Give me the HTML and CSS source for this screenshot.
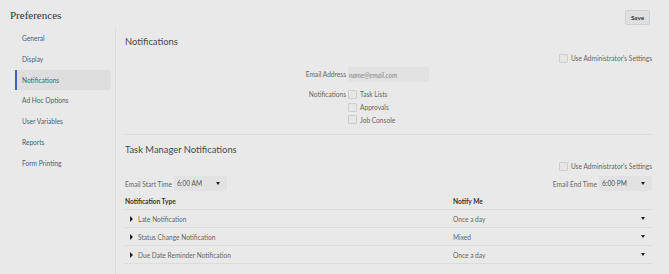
FILE: index.html
```html
<!DOCTYPE html>
<html lang="en">
<head>
    <meta charset="UTF-8">
    <title>Preferences</title>
    <link rel="stylesheet" href="styles.css">
</head>
<body>
    <div class="header">
        <h1>Preferences</h1>
        <button class="save">Save</button>
    </div>

    <div class="layout">
        <ul class="nav">
            <li>General</li>
            <li>Display</li>
            <li class="active">Notifications</li>
            <li>Ad Hoc Options</li>
            <li>User Variables</li>
            <li>Reports</li>
            <li>Form Printing</li>
        </ul>

        <div class="main">
            <section class="section">
                <h2>Notifications</h2>
                <label class="admin"><span class="box"></span>Use Administrator's Settings</label>

                <div class="form-row">
                    <span class="label">Email Address</span>
                    <input class="text" type="text" placeholder="name@email.com">
                </div>
                <div class="form-row">
                    <span class="label">Notifications</span>
                    <div class="checks">
                        <label><span class="box"></span>Task Lists</label>
                        <label><span class="box"></span>Approvals</label>
                        <label><span class="box"></span>Job Console</label>
                    </div>
                </div>
            </section>

            <section class="section tm">
                <h2>Task Manager Notifications</h2>
                <label class="admin"><span class="box"></span>Use Administrator's Settings</label>

                <div class="times">
                    <div class="time">
                        <span class="label">Email Start Time</span>
                        <div class="select">6:00 AM<span class="caret"></span></div>
                    </div>
                    <div class="time">
                        <span class="label">Email End Time</span>
                        <div class="select">6:00 PM<span class="caret"></span></div>
                    </div>
                </div>

                <table class="types">
                    <thead>
                        <tr><th>Notification Type</th><th class="col-notify">Notify Me</th></tr>
                    </thead>
                    <tbody>
                        <tr>
                            <td><span class="tri"></span>Late Notification</td>
                            <td class="col-notify"><div class="drop">Once a day<span class="caret"></span></div></td>
                        </tr>
                        <tr>
                            <td><span class="tri"></span>Status Change Notification</td>
                            <td class="col-notify"><div class="drop">Mixed<span class="caret"></span></div></td>
                        </tr>
                        <tr>
                            <td><span class="tri"></span>Due Date Reminder Notification</td>
                            <td class="col-notify"><div class="drop">Once a day<span class="caret"></span></div></td>
                        </tr>
                    </tbody>
                </table>
            </section>
        </div>
    </div>
</body>
</html>
```

FILE: styles.css
```css
body {
    margin: 0;
    background-color: #e9e9e9;
    font-family: Lato, "Open Sans", sans-serif;
    font-size: 6.6px;
    color: #666;
    height: 274px;
    overflow: hidden;
}
.header {
    display: flex;
    justify-content: space-between;
    align-items: flex-start;
    padding: 9px 19px 0 10px;
    height: 19px;
}
h1 {
    margin: 0;
    font-family: "Liberation Serif", serif;
    font-weight: normal;
    font-size: 11px;
    line-height: 12px;
    color: #333;
}
.save {
    margin-top: 1px;
    width: 25px;
    height: 15px;
    padding: 0;
    border: 1px solid #d0d0d0;
    border-radius: 2px;
    background-color: #e0e0e0;
    font-family: Lato, sans-serif;
    font-size: 6.3px;
    font-weight: bold;
    color: #333;
}
.layout {
    display: flex;
    height: 246px;
}
.nav {
    list-style: none;
    margin: 0;
    padding: 0 4px 0 15px;
    width: 96px;
    border-right: 1px solid #dcdcdc;
}
.nav li {
    height: 20.8px;
    line-height: 20.8px;
    padding-left: 7px;
    color: #4a5c7c;
}
.nav li.active {
    background-color: #dedede;
    border-left: 2px solid #3a64b5;
    padding-left: 5px;
}
.main {
    flex: 1;
    padding: 0 17px 0 9px;
}
h2 {
    margin: 0;
    font-weight: normal;
    font-size: 9.4px;
    color: #4a4a4a;
    line-height: 14px;
}
.section {
    padding-top: 7px;
    border-bottom: 1px solid #dcdcdc;
    padding-bottom: 8px;
}
.section.tm {
    border-bottom: none;
    padding-top: 8px;
}
.admin {
    display: flex;
    justify-content: flex-end;
    align-items: center;
    margin-top: 3px;
    height: 12px;
}
.box {
    display: inline-block;
    width: 7px;
    height: 7px;
    border: 1px solid #cfcfcf;
    border-radius: 1px;
    background-color: #e6e6e6;
    margin-right: 3px;
}
.form-row {
    display: grid;
    grid-template-columns: 221px auto;
    column-gap: 2px;
    align-items: start;
    margin-top: 3px;
}
.form-row + .form-row {
    margin-top: 6px;
}
.label {
    text-align: right;
    line-height: 12px;
    color: #666;
}
.form-row:first-of-type .label {
    line-height: 15px;
}
.text {
    width: 81px;
    height: 15px;
    box-sizing: border-box;
    border: none;
    background-color: #e2e2e2;
    padding: 0 1px;
    font-family: Lato, sans-serif;
    font-size: 6.6px;
    font-style: italic;
}
.text::placeholder {
    color: #888;
}
.checks label {
    display: flex;
    align-items: center;
    height: 12.7px;
    color: #666;
}
.times {
    display: flex;
    justify-content: space-between;
    margin-top: 4px;
}
.time {
    display: flex;
    align-items: center;
    gap: 2px;
}
.select {
    position: relative;
    width: 50px;
    height: 15px;
    line-height: 15px;
    padding-left: 3px;
    background-color: #e2e2e2;
    color: #555;
}
.caret {
    position: absolute;
    right: 7px;
    top: 6px;
    border-left: 2.5px solid transparent;
    border-right: 2.5px solid transparent;
    border-top: 3px solid #222;
}
.types {
    width: 100%;
    border-collapse: collapse;
    margin-top: 1px;
}
.types th {
    text-align: left;
    font-weight: bold;
    color: #333;
    height: 17px;
    padding: 0;
    border-bottom: 1px solid #dcdcdc;
}
.types td {
    height: 17px;
    padding: 0;
    border-bottom: 1px solid #dcdcdc;
    color: #666;
}
.col-notify {
    width: 199px;
}
.tri {
    display: inline-block;
    margin: 0 5px 0 5px;
    border-top: 3px solid transparent;
    border-bottom: 3px solid transparent;
    border-left: 3.5px solid #222;
}
.drop {
    position: relative;
}
.drop .caret {
    top: 2px;
}
```
